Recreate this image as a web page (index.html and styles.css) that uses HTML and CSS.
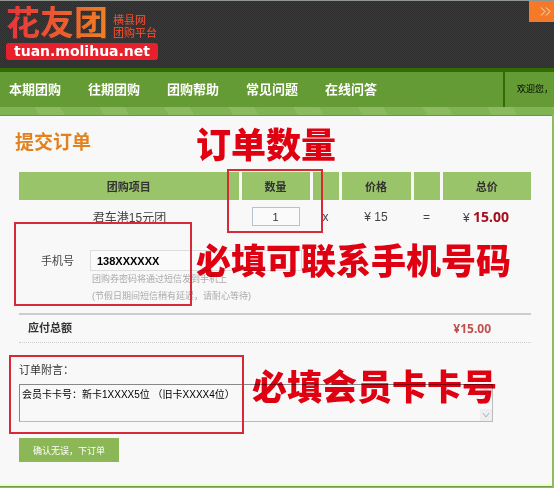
FILE: index.html
```html
<!DOCTYPE html>
<html lang="zh-CN">
<head>
    <meta charset="UTF-8">
    <meta name="viewport" content="width=device-width, initial-scale=1.0">
    <title>提交订单</title>
    <link rel="stylesheet" href="styles.css">
</head>
<body>
    <header class="header">
        <a class="logo" href="#">
            <span class="logo-top">
                <span class="logo-name">花友团</span>
                <span class="logo-sub">横县网<br>团购平台</span>
            </span>
            <span class="logo-url">tuan.molihua.net</span>
        </a>
        <button class="more" type="button" aria-label="更多">
            <svg width="11" height="9" viewBox="0 0 11 9" fill="none" stroke="#ffe2c4"><path d="M1 .5l4 4-4 4M6 .5l4 4-4 4"/></svg>
        </button>
    </header>

    <nav class="nav">
        <div class="nav-links">
            <a href="#">本期团购</a>
            <a href="#">往期团购</a>
            <a href="#">团购帮助</a>
            <a href="#">常见问题</a>
            <a href="#">在线问答</a>
        </div>
        <div class="welcome">欢迎您，</div>
    </nav>
    <div class="stripe"></div>

    <main class="panel">
        <h1>提交订单</h1>
        <form>
            <div class="block">
                <table class="items">
                    <colgroup>
                        <col class="col-name"><col class="col-count"><col class="col-sign"><col class="col-price"><col class="col-sign"><col class="col-total">
                    </colgroup>
                    <thead>
                        <tr><th>团购项目</th><th>数量</th><th></th><th>价格</th><th></th><th>总价</th></tr>
                    </thead>
                    <tbody>
                        <tr>
                            <td>君车港15元团</td>
                            <td><input class="count" type="text" value="1" aria-label="数量"></td>
                            <td>x</td>
                            <td>¥ 15</td>
                            <td>=</td>
                            <td>¥ <strong>15.00</strong></td>
                        </tr>
                    </tbody>
                </table>
                <div class="mark mark-count"></div>
                <div class="note note-count">订单数量</div>
            </div>

            <div class="block phone">
                <label for="mobile">手机号</label>
                <div class="phone-field">
                    <input id="mobile" type="text" value="138XXXXXX">
                    <p>团购券密码将通过短信发到手机上</p>
                    <p>(节假日期间短信稍有延迟，请耐心等待)</p>
                </div>
                <div class="mark mark-phone"></div>
                <div class="note note-phone">必填可联系手机号码</div>
            </div>

            <div class="sum">
                <span>应付总额</span>
                <span class="sum-price">¥15.00</span>
            </div>

            <div class="block remark">
                <label for="remark">订单附言：</label>
                <div class="remark-box">
                    <textarea id="remark">会员卡卡号：新卡1XXXX5位 （旧卡XXXX4位）</textarea>
                    <div class="scroll">
                        <svg width="12" height="12" viewBox="0 0 12 12" fill="none" stroke="#d5d9de"><path d="M3 7l3-3 3 3"/></svg>
                        <svg width="12" height="12" viewBox="0 0 12 12" fill="none" stroke="#a9b2c0"><path d="M3 4l3 4 3-4"/></svg>
                    </div>
                </div>
                <div class="mark mark-remark"></div>
                <div class="note note-remark">必填会员卡卡号</div>
            </div>

            <button class="submit" type="submit">确认无误，下订单</button>
        </form>
    </main>
</body>
</html>
```
FILE: styles.css
```css
* {
    box-sizing: border-box;
}
body {
    margin: 0;
    background-color: #8dbb5e;
    font-family: "Liberation Sans", "Noto Sans CJK SC", sans-serif;
    font-size: 11px;
    color: #444;
    overflow: hidden;
}
a {
    text-decoration: none;
}
input, textarea, button {
    font: inherit;
    border-radius: 0;
    outline: none;
}

/* header */
.header {
    display: flex;
    justify-content: space-between;
    align-items: flex-start;
    height: 68px;
    border-top: 1px solid #8f9590;
    background: repeating-conic-gradient(#2e2e2e 0 25%, #393939 0 50%) 0 0 / 2px 2px;
}
.logo {
    display: block;
    padding: 5px 0 0 6px;
}
.logo-top {
    display: flex;
    align-items: flex-end;
    gap: 5px;
    height: 34px;
}
.logo-name {
    font-size: 34px;
    line-height: 34px;
    font-weight: bold;
    color: transparent;
    background: linear-gradient(90deg, #e9323c, #f08024);
    background-clip: text;
}
.logo-sub {
    font-size: 11px;
    line-height: 13px;
    font-weight: 500;
    color: #e0492f;
}
.logo-url {
    display: block;
    width: 152px;
    margin-top: 3px;
    border-radius: 3px;
    background-color: #e8202c;
    color: #fff;
    font-family: "DejaVu Sans", sans-serif;
    font-size: 14px;
    line-height: 17px;
    font-weight: bold;
    text-align: center;
}
.more {
    display: flex;
    align-items: center;
    justify-content: center;
    width: 25px;
    height: 21px;
    padding: 0 0 0 8px;
    border: none;
    background-color: #f47a2a;
}

/* navigation */
.nav {
    display: flex;
    height: 39px;
    border-top: 4px solid #316c04;
    background-color: #659b34;
}
.nav-links {
    display: flex;
    flex: 1;
    align-items: center;
    gap: 27px;
    padding: 0 0 3px 9px;
}
.nav-links a {
    color: #fff;
    font-size: 13px;
    font-weight: bold;
    white-space: nowrap;
}
.welcome {
    display: flex;
    align-items: center;
    width: 51px;
    padding: 0 0 3px 12px;
    border-left: 2px solid #316c04;
    color: #000;
    font-size: 9px;
    white-space: nowrap;
}
.stripe {
    height: 8px;
    background: repeating-linear-gradient(60deg, #80b351 0 34px, #8cba60 34px 56px);
}

/* order panel */
.panel {
    margin: 0 2px 3px 0;
    border-top: 1px solid #6f8f59;
    border-bottom: 2px solid #eefbcf;
    padding: 14px 21px 22px 19px;
    background-color: #f8f8f8;
    box-shadow: 0 1px 0 #6f9c45;
}
h1 {
    margin: 0 0 14px -4px;
    color: #e2821e;
    font-size: 19px;
    line-height: 26px;
    font-weight: bold;
}
.block {
    position: relative;
}
.items {
    width: 100%;
    table-layout: fixed;
    border-collapse: collapse;
}
.col-count {
    width: 71px;
}
.col-sign {
    width: 29px;
}
.col-price {
    width: 72px;
}
.col-total {
    width: 90px;
}
.items th {
    height: 30px;
    padding: 0;
    border: 2px solid #f8f8f8;
    border-left: none;
    border-right-width: 3px;
    background-color: #99c46a;
    color: #333;
    font-size: 11px;
}
.items th:last-child {
    border-right: none;
}
.items td {
    height: 30px;
    padding: 0;
    font-size: 12px;
    text-align: center;
}
.items strong {
    color: #a3111d;
    font-family: "Noto Sans", sans-serif;
    font-size: 14px;
}
.count {
    width: 48px;
    height: 19px;
    padding: 0;
    border: 1px solid #b2c3d2;
    background-color: #fafafa;
    color: #333;
    font-size: 11px;
    text-align: center;
}

/* hand-drawn red hints over the form */
.mark {
    position: absolute;
    border: 2px solid #d82a36;
    pointer-events: none;
}
.note {
    position: absolute;
    color: #e60012;
    font-size: 35px;
    line-height: 40px;
    font-weight: 900;
    white-space: nowrap;
    pointer-events: none;
    mix-blend-mode: multiply;
}
.mark-count {
    left: 208px;
    top: -1px;
    width: 96px;
    height: 64px;
}
.note-count {
    left: 177px;
    top: -44px;
}
.mark-phone {
    left: -5px;
    top: -9px;
    width: 178px;
    height: 84px;
}
.note-phone {
    left: 177px;
    top: 11px;
}
.mark-remark {
    left: -10px;
    top: 12px;
    width: 235px;
    height: 79px;
}
.note-remark {
    left: 233px;
    top: 25px;
}

.phone {
    display: flex;
    gap: 16px;
    height: 82px;
    padding: 19px 0 0 22px;
}
.phone label {
    line-height: 22px;
}
.phone-field {
    flex: 1;
}
.phone-field input {
    display: block;
    width: 212px;
    height: 21px;
    padding: 0 6px;
    border: 1px solid #ddd;
    background-color: #fafafa;
    color: #000;
    font-weight: bold;
    font-size: 11px;
}
.phone-field p {
    margin: 0 0 0 2px;
    color: #aaa;
    font-size: 9px;
    line-height: 17px;
}
.sum {
    display: flex;
    justify-content: space-between;
    padding: 0 40px 0 9px;
    border-top: 2px solid #ccc;
    border-bottom: 1px dotted #ccc;
    color: #333;
    font-weight: bold;
    line-height: 27px;
}
.sum-price {
    color: #c0504d;
    font-family: "Noto Sans", sans-serif;
    font-size: 12px;
}
.remark {
    padding-top: 17px;
}
.remark label {
    display: block;
    color: #333;
    line-height: 20px;
}
.remark-box {
    display: flex;
    height: 38px;
    margin: 4px 38px 0 0;
    border: 1px solid #bbb;
    border-top-color: #888;
    border-left-color: #888;
}
.remark-box textarea {
    flex: 1;
    padding: 1px 2px;
    border: none;
    background: none;
    color: #000;
    font-size: 10px;
    line-height: 17px;
    resize: none;
    overflow: hidden;
}
.scroll {
    display: flex;
    flex-direction: column;
    justify-content: space-between;
    width: 12px;
}
.scroll svg {
    background-color: #eceef0;
}
.submit {
    display: block;
    height: 24px;
    margin-top: 16px;
    padding: 0 14px;
    border: none;
    background-color: #8bb757;
    color: #fff;
    font-size: 9px;
}
```
